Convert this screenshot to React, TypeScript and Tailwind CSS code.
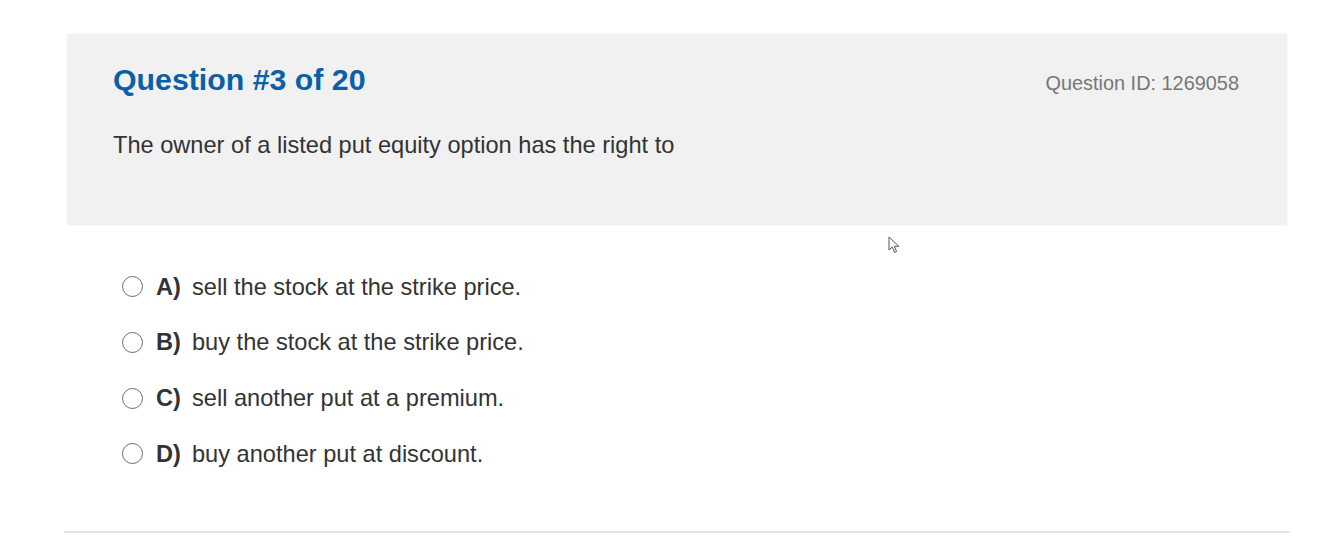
import React from "react";

const options = [
  { key: "A)", text: "sell the stock at the strike price." },
  { key: "B)", text: "buy the stock at the strike price." },
  { key: "C)", text: "sell another put at a premium." },
  { key: "D)", text: "buy another put at discount." },
];

export default function App() {
  return (
    <div
      className="relative w-[1334px] h-[560px] bg-white overflow-hidden"
      style={{ fontFamily: '"Liberation Sans", Arial, sans-serif' }}
    >
      <div className="pt-[34px] pl-[67px]">
        <div className="w-[1220px] h-[191px] bg-[#f1f1f1] shadow-[0_0_2px_rgba(0,0,0,0.06)] pl-[46px] pr-[48px] pt-[31px]">
          <div className="flex items-baseline justify-between">
            <h1 className="text-[30.3px] leading-[30px] font-bold text-[#0b5fa8]">
              Question #3 of 20
            </h1>
            <span className="text-[19.9px] leading-[20px] text-[#777777]">
              Question ID: 1269058
            </span>
          </div>
          <p className="mt-[38px] text-[23.6px] leading-[24px] text-[#333333]">
            The owner of a listed put equity option has the right to
          </p>
        </div>

        <div className="mt-[34px] pl-[55px]">
          {options.map((o) => (
            <div key={o.key} className="flex items-center h-[55.67px]">
              <span className="w-[21px] h-[21px] rounded-full border-[1.5px] border-[#6a6a6a] bg-white shrink-0" />
              <span className="ml-[13px] w-[36px] text-[23.6px] leading-[24px] font-bold text-[#333333]">
                {o.key}
              </span>
              <span className="text-[23.6px] leading-[24px] text-[#333333]">
                {o.text}
              </span>
            </div>
          ))}
        </div>
      </div>

      <div className="mt-[49px] ml-[64px] w-[1226px] h-[2px] bg-[#e6e6e6]" />

      <svg
        className="absolute left-[888px] top-[236px]"
        width="14"
        height="18"
        viewBox="0 0 14 18"
      >
        <path
          d="M1 1 L1 14 L4.2 11 L6.6 16.5 L8.6 15.6 L6.3 10.3 L10.8 10.3 Z"
          fill="#ffffff"
          stroke="#555555"
          strokeWidth="1"
          strokeLinejoin="round"
        />
      </svg>
    </div>
  );
}
